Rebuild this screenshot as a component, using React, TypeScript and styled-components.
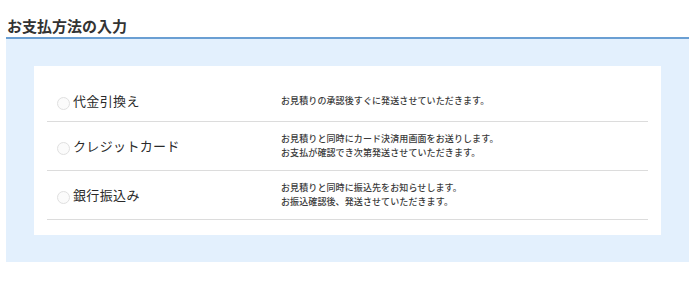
import React from "react";
import styled, { createGlobalStyle } from "styled-components";

const Global = createGlobalStyle`
  html, body { margin: 0; padding: 0; background: #ffffff; }
  body {
    font-family: "Noto Sans CJK JP", "Noto Sans", sans-serif;
    color: #333333;
  }
`;

const Section = styled.section`
  width: 683px;
  margin: 0 0 0 6px;
`;

const Heading = styled.h2`
  margin: 0;
  padding: 17px 0 3px 1px;
  font-size: 15px;
  line-height: 17px;
  font-weight: 700;
  color: #333333;
  border-bottom: 2px solid #6a9fd3;
`;

const Panel = styled.div`
  background: #e3f0fd;
  padding: 27px 28px;
`;

const Card = styled.div`
  background: #ffffff;
  padding: 15px 13px 15px;
`;

const Row = styled.label`
  display: flex;
  align-items: center;
  padding: 10px 0;
  border-bottom: 1px solid #dcdcdc;
  cursor: pointer;
`;

const Choice = styled.div`
  width: 234px;
  flex: none;
  display: flex;
  align-items: center;
  padding-left: 10px;
  box-sizing: border-box;
`;

const Radio = styled.span`
  width: 13px;
  height: 13px;
  border-radius: 50%;
  border: 1px solid #e0e0e0;
  background: #fbfbfb;
  box-sizing: border-box;
  margin: 4px 3px 0 0;
  flex: none;
`;

const Label = styled.span`
  font-size: 13px;
  line-height: 20px;
  letter-spacing: 0.35px;
  font-weight: 400;
  color: #2a2a2a;
`;

const Desc = styled.div`
  font-size: 9px;
  line-height: 14px;
  letter-spacing: 0.1px;
  font-weight: 500;
  color: #3a3a3a;
`;

const methods = [
  { name: "代金引換え", lines: ["お見積りの承認後すぐに発送させていただきます。"] },
  {
    name: "クレジットカード",
    lines: ["お見積りと同時にカード決済用画面をお送りします。", "お支払が確認でき次第発送させていただきます。"],
  },
  {
    name: "銀行振込み",
    lines: ["お見積りと同時に振込先をお知らせします。", "お振込確認後、発送させていただきます。"],
  },
];

export default function App() {
  return (
    <>
      <Global />
      <Section>
        <Heading>お支払方法の入力</Heading>
        <Panel>
          <Card>
            {methods.map((m) => (
              <Row key={m.name}>
                <Choice>
                  <Radio />
                  <Label>{m.name}</Label>
                </Choice>
                <Desc>
                  {m.lines.map((l) => (
                    <div key={l}>{l}</div>
                  ))}
                </Desc>
              </Row>
            ))}
          </Card>
        </Panel>
      </Section>
    </>
  );
}
